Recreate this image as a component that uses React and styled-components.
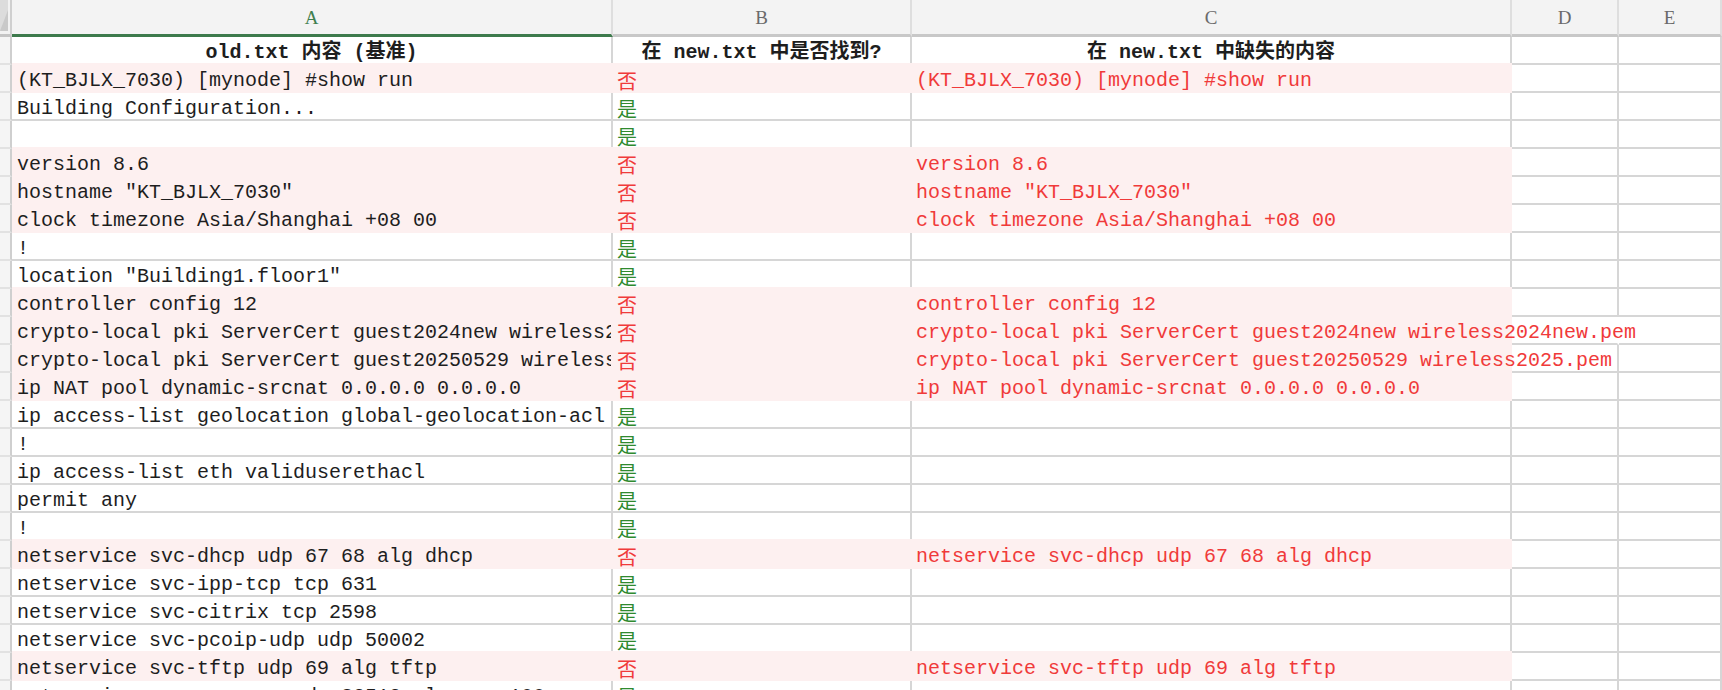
import styled, { createGlobalStyle } from 'styled-components';

const ROWS = [
  ['(KT_BJLX_7030) [mynode] #show run', false],
  ['Building Configuration...', true],
  ['', true],
  ['version 8.6', false],
  ['hostname "KT_BJLX_7030"', false],
  ['clock timezone Asia/Shanghai +08 00', false],
  ['!', true],
  ['location "Building1.floor1"', true],
  ['controller config 12', false],
  ['crypto-local pki ServerCert guest2024new wireless2024new.pem', false],
  ['crypto-local pki ServerCert guest20250529 wireless2025.pem', false],
  ['ip NAT pool dynamic-srcnat 0.0.0.0 0.0.0.0', false],
  ['ip access-list geolocation global-geolocation-acl', true],
  ['!', true],
  ['ip access-list eth validuserethacl', true],
  ['permit any', true],
  ['!', true],
  ['netservice svc-dhcp udp 67 68 alg dhcp', false],
  ['netservice svc-ipp-tcp tcp 631', true],
  ['netservice svc-citrix tcp 2598', true],
  ['netservice svc-pcoip-udp udp 50002', true],
  ['netservice svc-tftp udp 69 alg tftp', false],
  ['netservice svc-noe-oxo udp 32512 alg noe 100', true],
];

const COLS = ['A', 'B', 'C', 'D', 'E'];
const CHAR_W = 12;
const GRID = '#d6d6d6';
const PINK = '#fdf0f0';

const GlobalStyle = createGlobalStyle`
  html, body {
    margin: 0;
    background: #fff;
    overflow: hidden;
  }
  body {
    font-family: "Liberation Mono", "Noto Sans CJK SC", monospace;
    font-size: 20px;
    color: #1e1e1e;
  }
`;

const Sheet = styled.div`
  display: grid;
  grid-template-columns: 12px 601px 299px 600px 107px 1fr;
  grid-template-rows: 37px;
  grid-auto-rows: 28px;
  width: 1722px;
  height: 690px;
  overflow: hidden;
`;

const Corner = styled.div`
  background: #f2f2f2;
  border-right: 2px solid #cfcfcf;
  border-bottom: 3px solid #c4c4c4;
  box-sizing: border-box;
  overflow: hidden;
`;

const ColHead = styled.div`
  display: flex;
  align-items: center;
  justify-content: center;
  box-sizing: border-box;
  background: #f3f3f3;
  border-right: 2px solid #dedede;
  border-bottom: 3px solid ${(p) => (p.$active ? '#3d7a4c' : '#c8c8c8')};
  font-family: "Liberation Serif", "Noto Sans CJK SC", serif;
  font-size: 19px;
  padding-top: 1px;
  color: ${(p) => (p.$active ? '#3f7f4f' : '#6a6a6a')};
`;

const RowHead = styled.div`
  box-sizing: border-box;
  background: #f5f5f5;
  border-right: 2px solid #cfcfcf;
  border-bottom: 2px solid #e2e2e2;
`;

const Cell = styled.div`
  position: relative;
  box-sizing: border-box;
  display: flex;
  align-items: center;
  justify-content: ${(p) => (p.$center ? 'center' : 'flex-start')};
  padding: 6px ${(p) => (p.$center ? 0 : 4)}px 0 ${(p) => (p.$center ? 0 : p.$pad || 4)}px;
  white-space: pre;
  overflow: ${(p) => (p.$spill ? 'visible' : 'hidden')};
  line-height: 20px;
  font-weight: ${(p) => (p.$bold ? 700 : 400)};
  color: ${(p) => p.$color || '#1e1e1e'};
  background: ${(p) => (p.$fill ? PINK : 'transparent')};
  box-shadow: ${(p) => (p.$fill ? `0 -2px 0 ${PINK}` : 'none')};
  border-right: 2px solid ${(p) => (p.$fill ? PINK : p.$noRight ? 'transparent' : GRID)};
  border-bottom: 2px solid ${(p) => (p.$fill ? PINK : GRID)};
  z-index: ${(p) => (p.$spill ? 2 : 'auto')};
`;

const Flag = styled.span`
  font-family: "Noto Sans CJK SC", sans-serif;
  font-size: 20px;
  color: ${(p) => (p.$yes ? '#2f8a2f' : '#f03a3a')};
`;

function CornerMark() {
  return (
    <svg width="10" height="34" viewBox="0 0 10 34">
      <rect x="0" y="0" width="8" height="31" fill="#dcdcdc" />
      <polygon points="0,31 8,31 8,10" fill="#c9c9c9" />
    </svg>
  );
}

function DataRow({ text, found }) {
  const fill = !found;
  const missing = found ? '' : text;
  const reach = 4 + missing.length * CHAR_W;
  return (
    <>
      <RowHead />
      <Cell $fill={fill} $pad={5}>
        {text}
      </Cell>
      <Cell $fill={fill}>
        <Flag $yes={found}>{found ? '是' : '否'}</Flag>
      </Cell>
      <Cell $fill={fill} $color="#f03a3a" $spill={reach > 596}>
        {missing}
      </Cell>
      <Cell $noRight={reach > 600 + 105} />
      <Cell />
    </>
  );
}

export default function App() {
  return (
    <>
      <GlobalStyle />
      <Sheet>
        <Corner>
          <CornerMark />
        </Corner>
        {COLS.map((c) => (
          <ColHead key={c} $active={c === 'A'}>
            {c}
          </ColHead>
        ))}

        <RowHead />
        <Cell $bold $center>old.txt 内容 (基准)</Cell>
        <Cell $bold $center>在 new.txt 中是否找到?</Cell>
        <Cell $bold $center>在 new.txt 中缺失的内容</Cell>
        <Cell />
        <Cell />

        {ROWS.map(([text, found], i) => (
          <DataRow key={i} text={text} found={found} />
        ))}
      </Sheet>
    </>
  );
}
